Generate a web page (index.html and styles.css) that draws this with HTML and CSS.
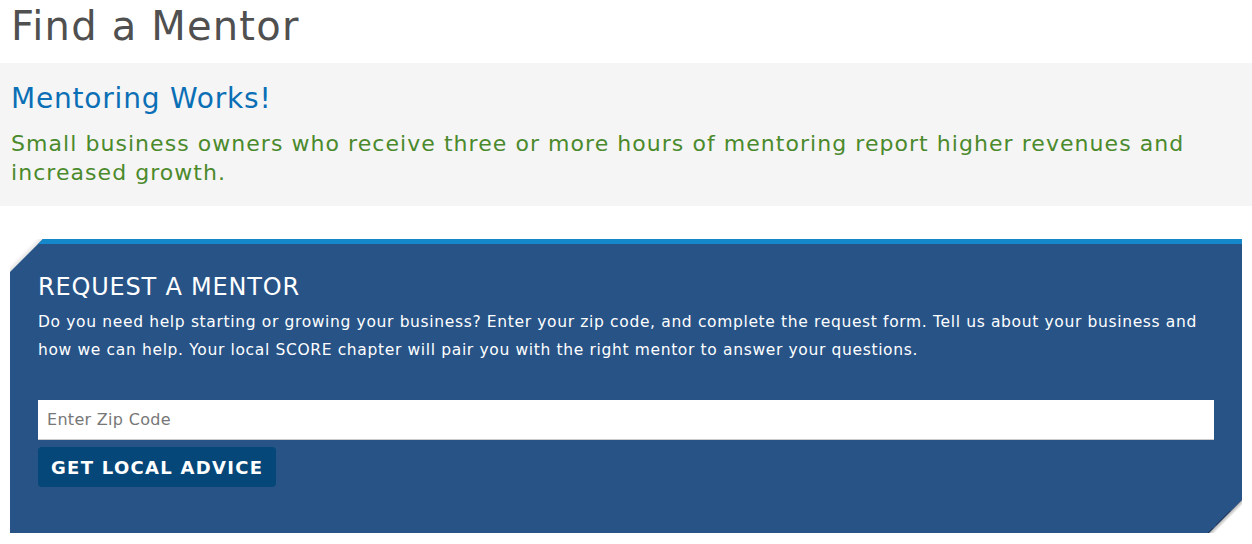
FILE: index.html
```html
<!DOCTYPE html>
<html lang="en">
<head>
<meta charset="utf-8">
<title>Find a Mentor</title>
<link rel="stylesheet" href="styles.css">
</head>
<body>
<h1 class="page-title">Find a Mentor</h1>
<section class="intro">
  <h2 class="intro-title">Mentoring Works!</h2>
  <p class="intro-text">Small business owners who receive three or more hours of mentoring report higher revenues and increased growth.</p>
</section>
<div class="request-wrap">
  <section class="request">
    <h2 class="request-title">REQUEST A MENTOR</h2>
    <p class="request-text">Do you need help starting or growing your business? Enter your zip code, and complete the request form. Tell us about your business and how we can help. Your local SCORE chapter will pair you with the right mentor to answer your questions.</p>
    <form class="request-form">
      <input class="zip" type="text" placeholder="Enter Zip Code">
      <button class="btn" type="button">GET LOCAL ADVICE</button>
    </form>
  </section>
</div>
</body>
</html>
```
FILE: styles.css
```css
html, body {
  margin: 0;
  padding: 0;
  background: #fff;
}
body {
  font-family: "DejaVu Sans", "Liberation Sans", sans-serif;
  width: 1252px;
  overflow: hidden;
}
.page-title {
  margin: 0;
  padding: 0 11px;
  height: 63px;
  font-size: 40px;
  font-weight: 400;
  letter-spacing: 1.2px;
  line-height: 52px;
  color: #505050;
}
.intro {
  background: #f5f5f5;
  padding: 18px 11px 20px;
  height: 105px;
}
.intro-title {
  margin: 0;
  font-size: 28px;
  font-weight: 400;
  letter-spacing: 0.8px;
  line-height: 36px;
  color: #0b6fb6;
}
.intro-text {
  margin: 13px 0 0;
  font-size: 22px;
  letter-spacing: 1.05px;
  line-height: 28.5px;
  color: #4b8a2c;
}
.request-wrap {
  position: relative;
  margin: 33px 10px 0;
}
.request-wrap::before,
.request-wrap::after {
  content: "";
  position: absolute;
  width: 34px;
  height: 34px;
  pointer-events: none;
}
.request-wrap::before {
  left: 0;
  top: 0;
  background: linear-gradient(135deg, transparent 38%, rgba(0,0,0,0.12) 50%, transparent 50%);
}
.request-wrap::after {
  right: 0;
  bottom: 0;
  background: linear-gradient(135deg, transparent 50%, rgba(0,0,0,0.35) 50%, transparent 60%);
}
.request {
  background: #275387;
  border-top: 5px solid #1587cb;
  height: 289px;
  padding: 0 28px;
  color: #fff;
  clip-path: polygon(33px 0, 100% 0, 100% calc(100% - 33px), calc(100% - 33px) 100%, 0 100%, 0 33px);
}
.request-title {
  margin: 0;
  padding-top: 28px;
  font-size: 24px;
  font-weight: 400;
  letter-spacing: 0.8px;
  line-height: 30px;
}
.request-text {
  margin: 6px 0 0;
  font-size: 15.5px;
  font-weight: 400;
  letter-spacing: 0.65px;
  line-height: 28px;
}
.request-form {
  margin-top: 36px;
  display: flex;
  flex-direction: column;
  align-items: flex-start;
  gap: 7px;
}
.zip {
  box-sizing: border-box;
  width: 1176px;
  height: 40px;
  margin: 0;
  border: 0;
  border-bottom: 1px solid #ccc;
  padding: 0 9px;
  font-family: inherit;
  font-size: 16px;
  letter-spacing: 0.3px;
  color: #333;
  background: #fff;
  outline: none;
}
.zip::placeholder {
  color: #777;
}
.btn {
  height: 40px;
  padding: 0 13px;
  border: 0;
  border-radius: 4px;
  background: #06477a;
  color: #fff;
  font-family: inherit;
  font-size: 18px;
  font-weight: 700;
  letter-spacing: 1.3px;
  cursor: pointer;
}
```
